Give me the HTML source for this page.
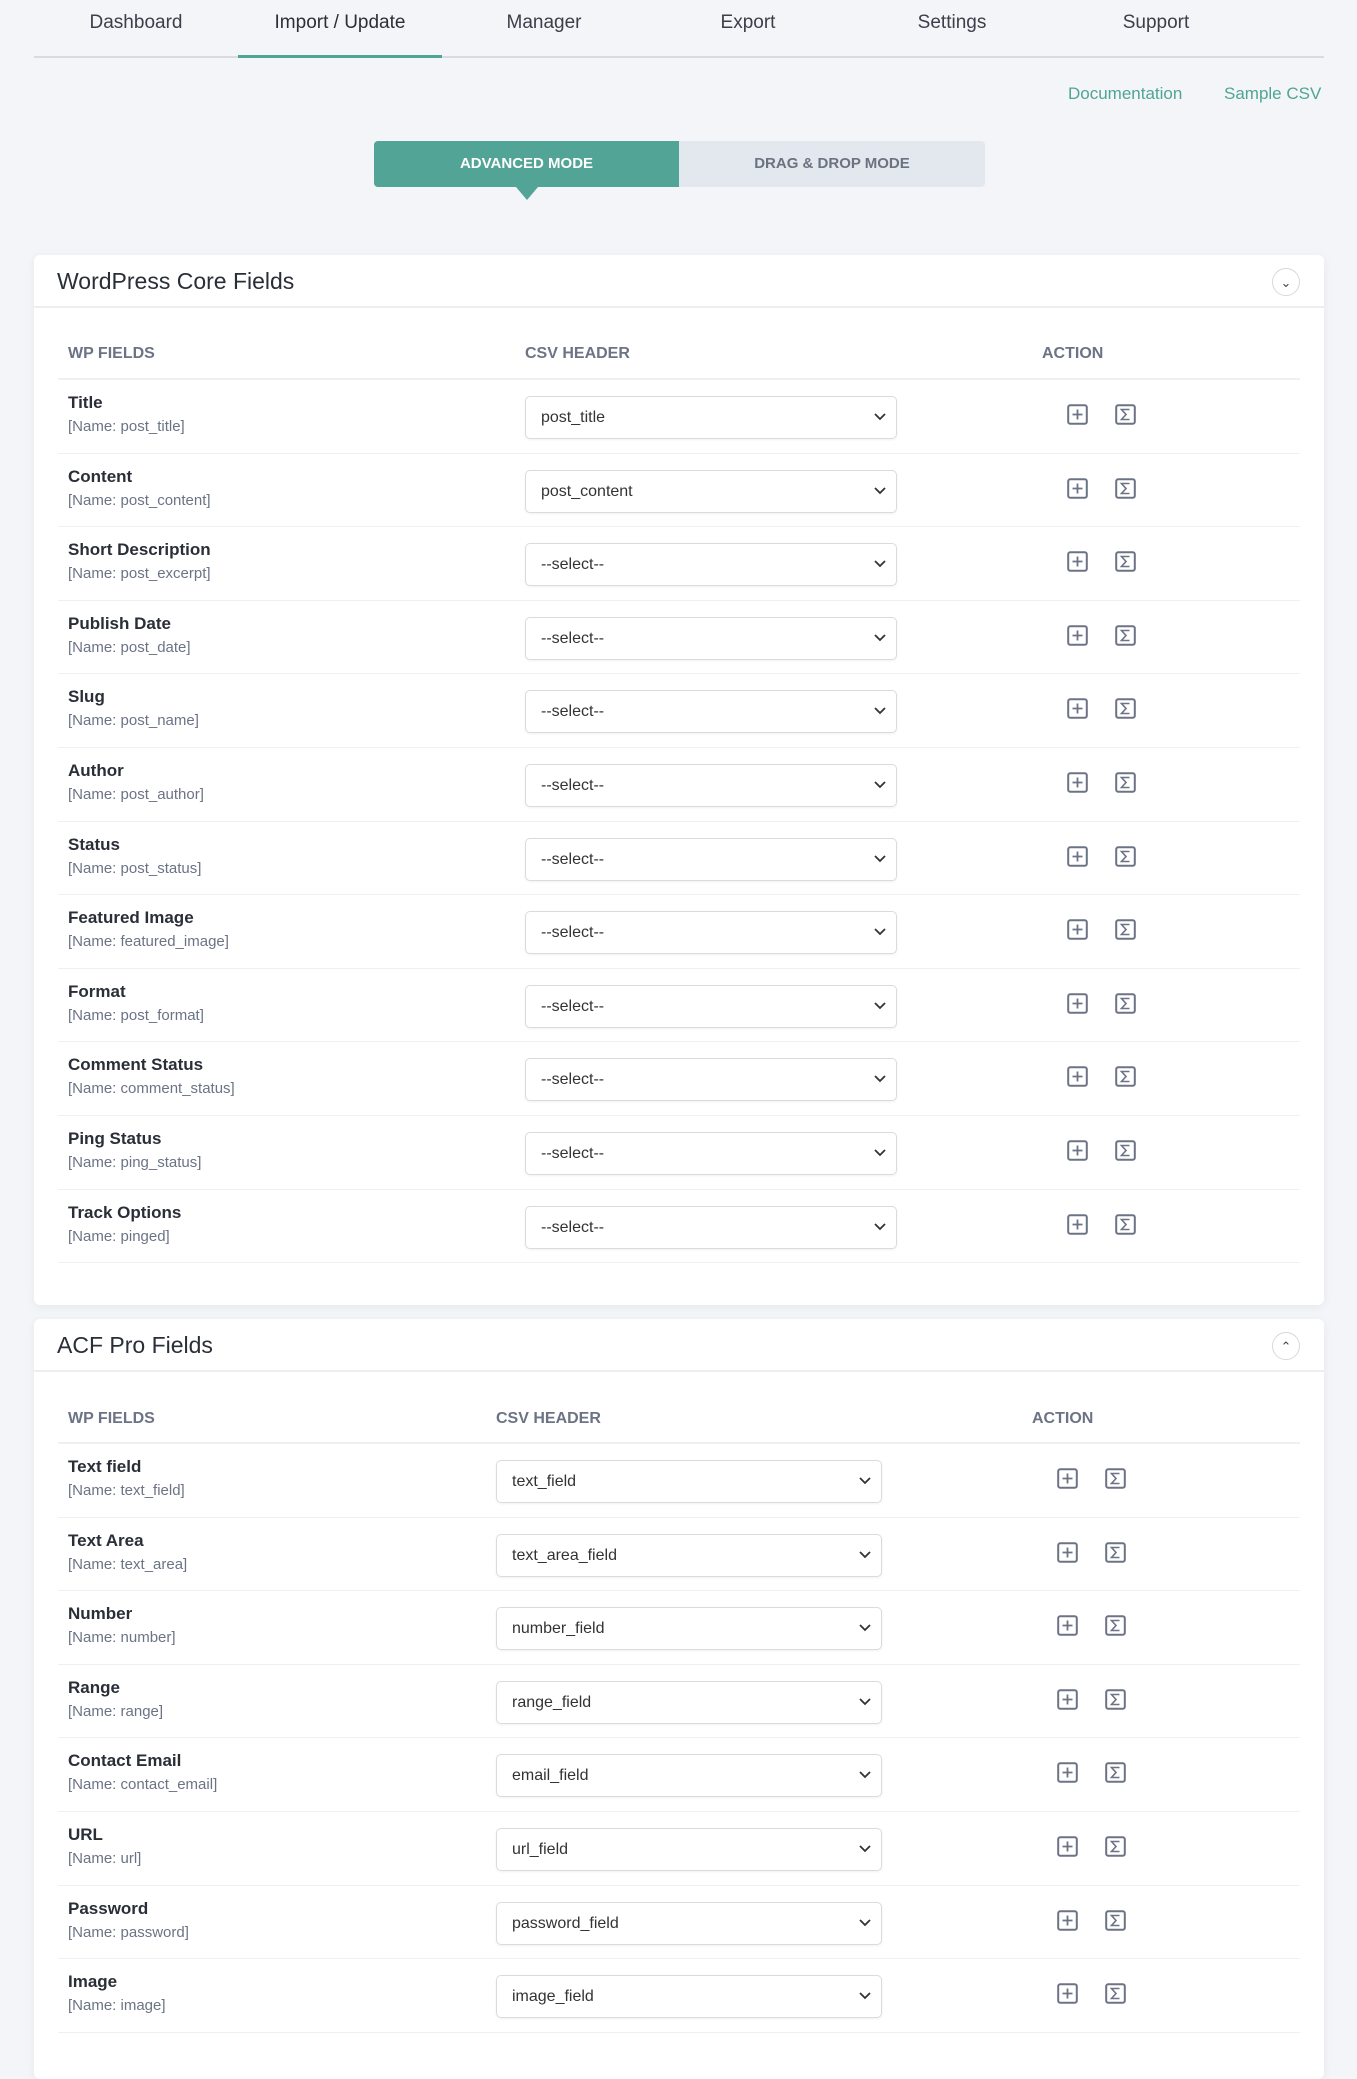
<!DOCTYPE html>
<html><head><meta charset="utf-8">
<style>
*{box-sizing:border-box;margin:0;padding:0}
body{width:1357px;height:2048px;overflow:hidden;background:#f3f5f8;font-family:"Liberation Sans",Arial,sans-serif;position:relative;color:#1f2430}
.nav{position:absolute;left:34px;top:0;width:1290px;height:58px;border-bottom:2px solid #d8dbe0}
.nav a{position:absolute;top:12px;width:204px;text-align:center;font-size:19px;color:#3a3f4a;text-decoration:none}
.nav .act{border-bottom:3px solid #4fa595;height:46px;color:#2b2f38}
.links{position:absolute;top:84px;font-size:17px;color:#4fa595}
.mode{position:absolute;left:374px;top:141px;width:611px;height:46px;background:#e3e7ee;border-radius:4px}
.mode .a{position:absolute;left:0;top:0;width:305px;height:46px;background:#52a596;border-radius:4px 0 0 4px;color:#fff;font-size:15px;text-align:center;line-height:46px;font-weight:bold}
.mode .a:after{content:"";position:absolute;left:142px;top:46px;border-left:11px solid transparent;border-right:11px solid transparent;border-top:13px solid #52a596}
.mode .b{position:absolute;left:305px;top:0;width:306px;height:46px;color:#6b7280;font-size:15px;text-align:center;line-height:46px;font-weight:bold}
.card{position:absolute;left:34px;width:1290px;background:#fff;border-radius:6px;box-shadow:0 2px 10px rgba(0,0,0,.06)}
.ch{height:53px;border-bottom:2px solid #eceef2;position:relative}
.ch h2{position:absolute;left:23px;top:13px;font-size:23px;font-weight:normal;color:#2a2e37}
.ch .tg{position:absolute;right:24px;top:13px;width:28px;height:28px;border:1px solid #d5d9df;border-radius:50%;font-size:13px;text-align:center;line-height:27px;color:#444}
.thd{position:absolute;top:0;left:0;right:0}
.colh{position:absolute;font-size:16px;font-weight:bold;color:#6b7385}
.hline{position:absolute;left:24px;right:24px;height:2px;background:#eef0f3}
.row{position:absolute;left:24px;right:24px;height:73.6px;border-bottom:1px solid #eef0f3}
.row .t{position:absolute;left:10px;top:13px;font-size:17px;font-weight:bold;color:#2a2e37}
.row .n{position:absolute;left:10px;top:38px;font-size:15px;color:#6b7385}
.sel{position:absolute;top:16px;height:43px;border:1px solid #d8dbe0;border-radius:5px;box-shadow:0 1px 2px rgba(0,0,0,.06);font-size:16px;color:#333;line-height:41px;padding-left:15px}
.sel svg{position:absolute;right:10px;top:15px}
.ic{position:absolute;top:24px}
</style></head><body>
<div class="nav">
<a style="left:0">Dashboard</a>
<a class="act" style="left:204px">Import / Update</a>
<a style="left:408px">Manager</a>
<a style="left:612px">Export</a>
<a style="left:816px">Settings</a>
<a style="left:1020px">Support</a>
</div>
<div class="links" style="left:1068px">Documentation</div>
<div class="links" style="left:1224px">Sample CSV</div>
<div class="mode"><div class="a">ADVANCED MODE</div><div class="b">DRAG &amp; DROP MODE</div></div>

<div class="card" style="top:255px;height:1050px">
<div class="ch"><h2>WordPress Core Fields</h2><div class="tg">&#8964;</div></div>
<div class="colh" style="left:34px;top:90px">WP FIELDS</div>
<div class="colh" style="left:491px;top:90px">CSV HEADER</div>
<div class="colh" style="left:1008px;top:90px">ACTION</div>
<div class="hline" style="top:123px"></div>
<div id="r1"></div>
</div>

<div class="card" style="top:1319px;height:760px">
<div class="ch"><h2>ACF Pro Fields</h2><div class="tg">&#8963;</div></div>
<div class="colh" style="left:34px;top:91px">WP FIELDS</div>
<div class="colh" style="left:462px;top:91px">CSV HEADER</div>
<div class="colh" style="left:998px;top:91px">ACTION</div>
<div class="hline" style="top:123px"></div>
<div id="r2"></div>
</div>

<script>
var icons='<svg width="21" height="21" viewBox="0 0 21 21"><rect x="1.2" y="1.2" width="18.6" height="18.6" rx="2" fill="none" stroke="#6b7385" stroke-width="2"/><path d="M10.5 5.5v10M5.5 10.5h10" stroke="#6b7385" stroke-width="1.8"/></svg>';
var sig='<svg width="21" height="21" viewBox="0 0 21 21"><rect x="1.2" y="1.2" width="18.6" height="18.6" rx="2" fill="none" stroke="#6b7385" stroke-width="2"/><path d="M14.5 5.5H6.5L11 10.5L6.5 15.5H14.5" fill="none" stroke="#6b7385" stroke-width="1.6"/></svg>';
var chev='<svg width="12" height="10" viewBox="0 0 12 10"><path d="M1 2l5 5 5-5" fill="none" stroke="#333" stroke-width="1.8"/></svg>';
function build(id,rows,selL,selW,ic1){
 var h='';
 rows.forEach(function(r,i){
  h+='<div class="row" style="top:'+(125+i*73.6)+'px"><div class="t">'+r[0]+'</div><div class="n">[Name: '+r[1]+']</div>'+
  '<div class="sel" style="left:'+selL+'px;width:'+selW+'px">'+r[2]+chev+'</div>'+
  '<div class="ic" style="left:'+ic1+'px">'+icons+'</div><div class="ic" style="left:'+(ic1+48)+'px">'+sig+'</div></div>';
 });
 document.getElementById(id).outerHTML=h;
}
var s='--select--';
build('r1',[["Title","post_title","post_title"],["Content","post_content","post_content"],["Short Description","post_excerpt",s],["Publish Date","post_date",s],["Slug","post_name",s],["Author","post_author",s],["Status","post_status",s],["Featured Image","featured_image",s],["Format","post_format",s],["Comment Status","comment_status",s],["Ping Status","ping_status",s],["Track Options","pinged",s]],467,372,1009);
build('r2',[["Text field","text_field","text_field"],["Text Area","text_area","text_area_field"],["Number","number","number_field"],["Range","range","range_field"],["Contact Email","contact_email","email_field"],["URL","url","url_field"],["Password","password","password_field"],["Image","image","image_field"]],438,386,999);
</script>
</body></html>
